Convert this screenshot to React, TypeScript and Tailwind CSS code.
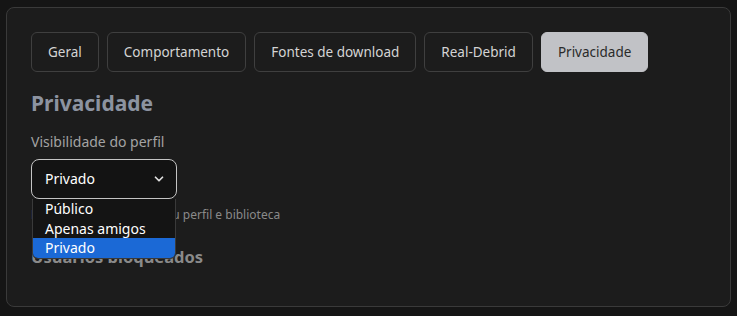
import { ChevronDown } from "lucide-react";

const tabs = ["Geral", "Comportamento", "Fontes de download", "Real-Debrid", "Privacidade"];
const options = ["Público", "Apenas amigos", "Privado"];

const App = () => {
  return (
    <div
      className="min-h-[316px] bg-[#151515] px-[6px] pt-[7px] pb-[9px]"
      style={{ fontFamily: '"Noto Sans", "Open Sans", sans-serif' }}
    >
      <div className="h-[300px] rounded-lg border border-[#3a3a3a] bg-[#1c1c1c] px-[24px] pt-[24px]">
        <div className="flex gap-2">
          {tabs.map((t) => (
            <button
              key={t}
              className={
                t === "Privacidade"
                  ? "h-[40px] rounded-md border border-[#c1c2c6] bg-[#c1c2c6] px-[16px] text-[13.5px] text-[#2a2a2a]"
                  : "h-[40px] rounded-md border border-[#3f3f3f] bg-[#1c1c1c] px-[16px] text-[13.5px] text-[#d4d4d4]"
              }
            >
              {t}
            </button>
          ))}
        </div>

        <h2 className="mt-[17px] text-[21px] font-bold leading-[28px] text-[#8c93a0]">Privacidade</h2>

        <div className="mt-[15px] text-sm leading-5 text-[#a3a3a3]">Visibilidade do perfil</div>

        <div className="relative mt-[7px] w-[146px]">
          <div className="flex h-[40px] items-center justify-between rounded-lg border border-[#c4c4c4] bg-[#131313] pl-[13px] pr-[10px] text-sm text-white">
            <span>Privado</span>
            <ChevronDown size={14} strokeWidth={3} className="text-[#e0e0e0]" />
          </div>
          <ul className="absolute left-[1px] top-[40px] z-10 w-[144px] overflow-hidden rounded-b-md border border-t-0 border-[#3a3a3a] bg-[#141414] text-[14px] leading-[19.7px] text-white">
            {options.map((o) => (
              <li key={o} className={o === "Privado" ? "bg-[#1b69d6] pl-[12px]" : "pl-[12px]"}>
                {o}
              </li>
            ))}
          </ul>
        </div>

        <p className="mt-[8px] text-xs leading-4 text-[#8a8a8a]">Defina quem pode ver seu perfil e biblioteca</p>

        <h3 className="mt-[22px] text-[16.5px] font-bold leading-6 text-[#8a8a8a]">Usuários bloqueados</h3>
      </div>
    </div>
  );
};

export default App;
